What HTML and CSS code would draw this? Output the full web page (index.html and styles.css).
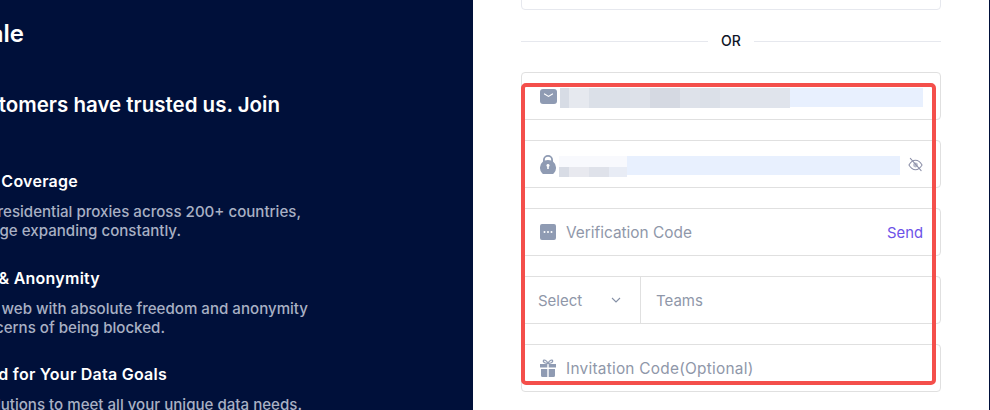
FILE: index.html
```html
<!DOCTYPE html>
<html lang="en">
<head>
<meta charset="utf-8">
<title>Sign up</title>
<link rel="stylesheet" href="styles.css">
</head>
<body>
<div class="page">
  <aside class="promo">
    <h1 class="promo-title line end-24">Reliable Proxies at Scale</h1>
    <p class="promo-lead line end-280">200,000+ customers have trusted us. Join</p>
    <ul class="features">
      <li class="feature">
        <h2 class="feature-title line end-78">Global IP Coverage</h2>
        <p class="feature-text line end-301">Over 90M+ residential proxies across 200+ countries,</p>
        <p class="feature-text line end-181">with coverage expanding constantly.</p>
      </li>
      <li class="feature">
        <h2 class="feature-title line end-100">Freedom &amp; Anonymity</h2>
        <p class="feature-text line end-308">Explore the web with absolute freedom and anonymity</p>
        <p class="feature-text line end-165">without concerns of being blocked.</p>
      </li>
      <li class="feature">
        <h2 class="feature-title line end-167">Tailored for Your Data Goals</h2>
        <p class="feature-text line end-302">Flexible solutions to meet all your unique data needs.</p>
      </li>
    </ul>
  </aside>
  <main class="panel">
    <div class="form">
      <div class="social"></div>
      <div class="divider"><span class="divider-text">OR</span></div>
      <div class="field">
        <svg class="ico ico-mail" viewBox="0 0 17 15"><rect width="17" height="15" rx="3" fill="#8f9bb3"/><path d="M4.500 5l4 2.400L12.500 5" fill="none" stroke="#fff" stroke-width="1.200" stroke-linecap="round"/></svg>
        <div class="autofill autofill-mail"><span class="blur blur-mail"></span></div>
      </div>
      <div class="field">
        <svg class="ico ico-lock" viewBox="0 0 16 19"><path fill="#8f9bb3" fill-rule="evenodd" d="M8 0a5 5 0 0 1 5 5v1.600a8 8 0 1 1-10 0V5a5 5 0 0 1 5-5zm0 1.800A3.200 3.200 0 0 0 4.800 5v.6a8 8 0 0 1 6.400 0V5A3.200 3.200 0 0 0 8 1.800zM8 9a1.500 1.500 0 0 0-.8 2.800V14h1.600v-2.200A1.500 1.500 0 0 0 8 9z"/></svg>
        <div class="autofill autofill-pass"><span class="blur blur-pass"></span></div>
        <svg class="ico-eye" viewBox="0 0 16 16"><g fill="none" stroke="#8b8fa8" stroke-width="1.100" stroke-linecap="round"><path d="M1 8.500c2-3.300 4.300-5 7-5s5 1.700 7 5c-2 3.300-4.300 5-7 5s-5-1.700-7-5z"/><circle cx="8" cy="8.500" r="2.600" fill="#b9bccb" stroke="none"/><path d="M2.500 1.500l11.500 13"/></g></svg>
      </div>
      <div class="field">
        <svg class="ico ico-code" viewBox="0 0 16 16"><path fill="#8f9bb3" fill-rule="evenodd" d="M2 0h12a2 2 0 0 1 2 2v12a2 2 0 0 1-2 2H2a2 2 0 0 1-2-2V2a2 2 0 0 1 2-2zm2.500 7a1 1 0 1 0 0 2 1 1 0 0 0 0-2zM8 7a1 1 0 1 0 0 2 1 1 0 0 0 0-2zm3.500 0a1 1 0 1 0 0 2 1 1 0 0 0 0-2z"/></svg>
        <span class="placeholder placeholder-icon">Verification Code</span>
        <span class="send">Send</span>
      </div>
      <div class="field field-split">
        <div class="select">
          <span class="placeholder">Select</span>
          <svg class="chev" viewBox="0 0 10 6"><path d="M1 1l4 4 4-4" fill="none" stroke="#8590a6" stroke-width="1.100"/></svg>
        </div>
        <span class="placeholder teams">Teams</span>
      </div>
      <div class="field">
        <svg class="ico ico-gift" viewBox="0 0 16 18"><path fill="#8f9bb3" d="M0 5h7.300v3.500H0zM8.700 5H16v3.500H8.700zM1 10h6.300v8H2.500A1.500 1.500 0 0 1 1 16.500zM8.700 10H15v6.500a1.500 1.500 0 0 1-1.500 1.500H8.700z"/><path fill="none" stroke="#8f9bb3" stroke-width="1.300" d="M8 4.600C6.500 1 3.600.2 3.300 2c-.2 1.500 2.200 2.400 4.700 2.600zm0 0c1.500-3.600 4.400-4.400 4.700-2.600.2 1.500-2.200 2.400-4.700 2.600z"/></svg>
        <span class="placeholder placeholder-icon placeholder-wide">Invitation Code(Optional)</span>
      </div>
    </div>
  </main>
</div>
<div class="highlight"></div>
</body>
</html>
```
FILE: styles.css
```css
* { box-sizing: border-box; }
html, body { margin: 0; height: 100%; overflow: hidden; background: #fff; }
body { font-family: "Inter", "Noto Sans", sans-serif; }
.page { display: flex; width: 990px; height: 410px; overflow: hidden; }

.promo { width: 473px; flex: none; background: #00103a; color: #fff; overflow: hidden; padding-top: 19px; }
.line { display: flex; justify-content: flex-end; white-space: nowrap; }
.end-24 { width: 24px; }
.end-78 { width: 78px; }
.end-100 { width: 100px; }
.end-165 { width: 165px; }
.end-167 { width: 167px; }
.end-181 { width: 181px; }
.end-280 { width: 280px; }
.end-301 { width: 301px; }
.end-302 { width: 302px; }
.end-308 { width: 308px; }
.promo-title { margin: 0; font-size: 24px; line-height: 30px; font-weight: 600; }
.promo-lead { margin: 41px 0 0; font-size: 20.5px; line-height: 30px; font-weight: 600; }
.features { list-style: none; margin: 0; padding: 0; }
.feature { margin-top: 25.500px; }
.feature:first-child { margin-top: 49px; }
.feature-title { margin: 0 0 9px; font-size: 16px; line-height: 24px; font-weight: 600; letter-spacing: .25px; }
.feature-text { margin: 0; font-size: 15.100px; font-weight: 500; line-height: 19px; color: #a9b0c4; }

.panel { flex: 1; min-width: 0; padding-left: 48px; border-right: 1px solid #00103a; }
.form { width: 420px; margin-top: -38px; display: flex; flex-direction: column; }
.social { height: 48px; border: 1px solid #e6e8ee; border-radius: 4px; }
.divider { display: flex; align-items: center; gap: 13.5px; margin-top: 21px; height: 20px; font-size: 14px; color: #0f1527; font-weight: 500; }
.divider::before, .divider::after { content: ""; flex: 1; border-top: 1px solid #e6e8ee; }
.divider-text { line-height: 20px; }
.field { height: 48px; margin-top: 20px; border: 1px solid #e0e0e0; border-radius: 4px; display: flex; align-items: center; padding: 0 17px 0 18px; position: relative; flex: none; }
.divider + .field { margin-top: 21px; }
.ico { flex: none; display: block; }
.ico-mail { width: 17px; height: 15px; }
.ico-lock { width: 16px; height: 19px; }
.ico-code { width: 16px; height: 16px; }
.ico-gift { width: 16px; height: 18px; }
.autofill { height: 19px; background: #e8f0fe; margin: 2px 0 0 3px; }
.autofill-mail { width: 364px; }
.autofill-pass { width: 341px; }
.blur { display: block; }
.blur-mail { width: 230px; height: 20px; background: linear-gradient(90deg, #d7dce5 0 9px, #e6e9ef 9px 29px, #dbe0e8 29px 70px, #dde1e9 70px 90px, #d5d9e2 90px 120px, #dee2ea 120px 140px, #dbe0e8 140px 160px, #e0e4ec 160px); }
.blur-pass { width: 68px; height: 21px; background: linear-gradient(180deg, #f8f9fd 0 11px, transparent 11px), linear-gradient(90deg, #d8dce5 0 10px, #e8e9ef 10px 30px, #dfe2ea 30px 50px, #e8ecf5 50px); }
.ico-eye { width: 15px; height: 15px; position: absolute; right: 17px; top: 16px; }
.placeholder { font-size: 15px; line-height: 20px; padding-top: 2px; color: #8f97a9; white-space: nowrap; }
.placeholder-icon { margin-left: 10px; font-size: 15.4px; }
.placeholder-wide { letter-spacing: .25px; }
.send { margin-left: auto; font-size: 14.8px; color: #6d52e8; padding-top: 1px; }
.field-split { padding: 0; }
.select { width: 119px; height: 100%; display: flex; align-items: center; justify-content: space-between; padding: 0 19px 0 16px; border-right: 1px solid #e0e0e0; flex: none; }
.chev { width: 10px; height: 6px; }
.teams { margin-left: 15px; }

/* Annotation drawn over the form */
.highlight { position: absolute; left: 521px; top: 83px; width: 415px; height: 302px; border: 4px solid #f44f4b; border-radius: 5px; }
```
